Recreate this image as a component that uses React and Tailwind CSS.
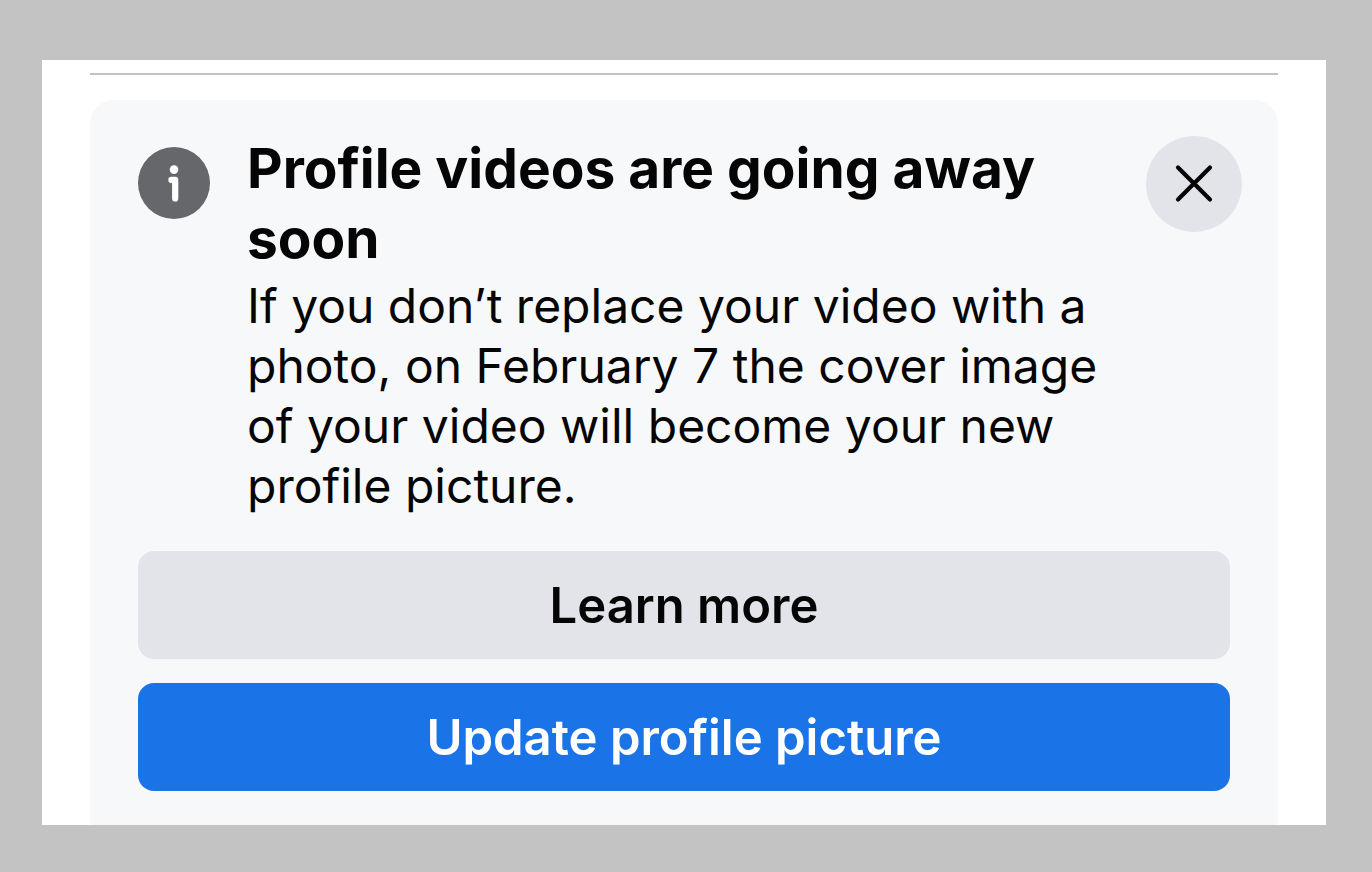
import React from "react";

function InfoIcon() {
  return (
    <svg viewBox="0 0 72 72" className="mt-3.5 size-18 shrink-0" aria-hidden="true">
      <circle cx="36" cy="36" r="36" fill="#66676b" />
      <circle cx="36" cy="22.6" r="4.3" fill="#fff" />
      <path d="M33.4 32.9h3.8v18.6" fill="none" stroke="#fff" strokeWidth="6.2" strokeLinecap="round" strokeLinejoin="round" />
    </svg>
  );
}

function CloseIcon() {
  return (
    <svg viewBox="0 0 96 96" className="size-full" aria-hidden="true">
      <path d="M32 31.5l32 32M64 31.5l-32 32" fill="none" stroke="#050505" strokeWidth="4.2" strokeLinecap="round" />
    </svg>
  );
}

// Full-width actions under the message
const actions = [
  { label: "Learn more", style: "bg-[#e3e4e9] text-[#050505]" },
  { label: "Update profile picture", style: "bg-[#1b74e7] text-white" },
];

function App() {
  return (
    <div className="min-h-screen bg-[#c3c3c3] pt-15 pr-[46px] pb-[47px] pl-[42px] font-['Inter',sans-serif] text-[#050505]">
      <main className="bg-white px-12 pt-[13px]">
        <hr className="mb-[25px] border-t-2 border-[#c3c3c3]" />

        <section className="rounded-t-3xl bg-[#f7f8fa] px-12 pt-[33px] pb-[34px]">
          <div className="-mr-3 flex items-start">
            <InfoIcon />
            <div className="ml-[37px] flex-1">
              <h1 className="text-[55px] leading-[70px] font-bold">Profile videos are going away soon</h1>
              <p className="mt-[3px] pr-8 text-[48px] leading-[60px]">
                If you don’t replace your video with a photo, on February 7 the cover image of your video will become
                your new profile picture.
              </p>
            </div>
            <button aria-label="Close" className="mt-[3px] size-24 shrink-0 rounded-full bg-[#e3e4e9]">
              <CloseIcon />
            </button>
          </div>

          <div className="mt-[35px] flex flex-col gap-6">
            {actions.map((action) => (
              <button
                key={action.label}
                className={`h-27 w-full rounded-2xl pt-0.5 text-[49px] leading-[60px] font-semibold ${action.style}`}
              >
                {action.label}
              </button>
            ))}
          </div>
        </section>
      </main>
    </div>
  );
}

export default App;
